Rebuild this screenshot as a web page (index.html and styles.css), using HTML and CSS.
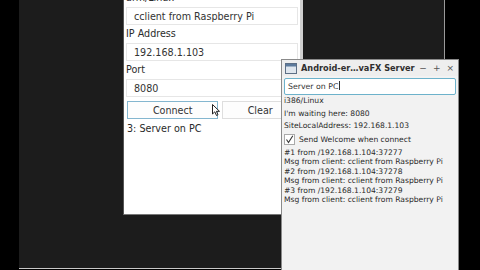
FILE: index.html
```html
<!DOCTYPE html>
<html lang="en">
<head>
    <meta charset="UTF-8">
    <title>Raspberry Pi client / JavaFX server</title>
    <link rel="stylesheet" href="styles.css">
</head>
<body>
    <div class="screen">
        <div class="desktop">
            <!-- Client app running on the Pi -->
            <div class="phone">
                <div class="label first">arm/Linux</div>
                <div class="field">cclient from Raspberry Pi</div>
                <div class="label">IP Address</div>
                <div class="field">192.168.1.103</div>
                <div class="label">Port</div>
                <div class="field">8080</div>
                <div class="buttons">
                    <button class="btn focused">Connect</button>
                    <button class="btn clear">Clear</button>
                </div>
                <div class="status">3: Server on PC</div>
            </div>
        </div>
    </div>

    <!-- Server window -->
    <div class="window">
        <div class="titlebar">
            <svg class="app-icon" width="12" height="11" viewBox="0 0 12 11">
                <rect x="0.5" y="0.5" width="11" height="10" fill="#dfe6ee" stroke="#5d6f86"/>
                <rect x="1" y="1" width="10" height="2.5" fill="#5d7a9c"/>
            </svg>
            <span class="title">Android-er…vaFX Server</span>
            <span class="controls">
                <span>−</span><span>+</span><span>×</span>
            </span>
        </div>
        <div class="win-body">
            <div class="input">Server on PC<span class="caret"></span></div>
            <div class="info">i386/Linux</div>
            <div class="info">I'm waiting here: 8080</div>
            <div class="info">SiteLocalAddress: 192.168.1.103</div>
            <div class="check-row">
                <span class="checkbox">
                    <svg width="9" height="9" viewBox="0 0 9 9">
                        <path d="M1.5 4.5 L3.5 7.5 L7.8 0.8" fill="none" stroke="#333" stroke-width="1.1"/>
                    </svg>
                </span>
                Send Welcome when connect
            </div>
            <div class="log">
                <div>#1 from /192.168.1.104:37277</div>
                <div>Msg from client: cclient from Raspberry Pi</div>
                <div>#2 from /192.168.1.104:37278</div>
                <div>Msg from client: cclient from Raspberry Pi</div>
                <div>#3 from /192.168.1.104:37279</div>
                <div>Msg from client: cclient from Raspberry Pi</div>
            </div>
        </div>
    </div>

    <!-- Mouse pointer -->
    <svg class="cursor" width="8" height="12" viewBox="0 0 8 12">
        <path d="M0.5 0.5 L0.5 10 L2.8 7.8 L4.5 11.5 L6 10.8 L4.4 7.3 L7.5 7.3 Z" fill="#fff" stroke="#222" stroke-width="1"/>
    </svg>
</body>
</html>
```

FILE: styles.css
```css
* {
    margin: 0;
    padding: 0;
    box-sizing: border-box;
}
body {
    width: 480px;
    height: 270px;
    overflow: hidden;
    background-color: #000;
    font-family: "DejaVu Sans", Arial, sans-serif;
    color: #2a2a2a;
    position: relative;
}
.screen {
    display: flex;
    height: 270px;
}
.desktop {
    margin-left: 19px;
    width: 426px;
    height: 269px;
    background-color: #1c1c1c;
    border-right: 1px solid #9a9a9a;
    border-bottom: 1px solid #c8c8c8;
}

/* client panel */
.phone {
    margin-left: 104px;
    width: 180px;
    height: 226px;
    background-color: #fff;
    border-left: 1px solid #555;
    border-right: 3px solid #cfcfcf;
    border-bottom: 1px solid #777;
    padding: 0 2px 0 1px;
    font-size: 9.6px;
}
.label {
    height: 18px;
    line-height: 18px;
    padding-left: 1px;
    color: #2b2b2b;
}
.label.first {
    margin-top: -11px;
}
.field {
    height: 18px;
    line-height: 17px;
    width: 172px;
    margin-left: 1px;
    padding-left: 7px;
    border: 1px solid #e6e6e6;
    color: #333;
    background-color: #fff;
}
.buttons {
    display: flex;
    gap: 4px;
    margin-top: 4px;
    padding-left: 2px;
}
.btn {
    height: 18px;
    font-family: inherit;
    font-size: 9.6px;
    color: #333;
    background-color: #fdfdfd;
    border: 1px solid #dedede;
}
.btn.focused {
    width: 92px;
    border-color: #84b6cf;
}
.btn.clear {
    width: 76px;
}
.status {
    margin-top: 2px;
    line-height: 16px;
    padding-left: 2px;
}

/* server window */
.window {
    position: absolute;
    left: 281px;
    top: 59px;
    width: 178px;
    height: 212px;
    background-color: #f2f2f2;
    border: 1px solid #8a8a8a;
    font-size: 7.6px;
}
.titlebar {
    display: flex;
    align-items: center;
    height: 16px;
    padding-left: 3px;
    background-color: #eeeeee;
}
.app-icon {
    flex-shrink: 0;
}
.title {
    margin-left: 4px;
    font-size: 8.2px;
    font-weight: bold;
    color: #2e2e2e;
    white-space: nowrap;
}
.controls {
    display: flex;
    gap: 6px;
    margin-left: auto;
    padding-right: 4px;
    font-size: 9px;
    color: #555;
}
.win-body {
    padding: 2px 2px 0 2px;
}
.input {
    height: 17px;
    line-height: 15px;
    width: 172px;
    padding-left: 3px;
    background-color: #fff;
    border: 1px solid #6db2cb;
    border-radius: 2px;
    color: #333;
    font-size: 7.8px;
}
.caret {
    display: inline-block;
    width: 1px;
    height: 9px;
    margin-left: 1px;
    vertical-align: -1px;
    background-color: #333;
}
.info {
    line-height: 12.5px;
}
.check-row {
    display: flex;
    align-items: center;
    gap: 4px;
    height: 13px;
}
.checkbox {
    display: flex;
    align-items: center;
    justify-content: center;
    width: 11px;
    height: 11px;
    background-color: #fff;
    border: 1px solid #aaa;
}
.log {
    margin-top: 2px;
    line-height: 9.5px;
}
.log div {
    height: 9.5px;
}
.cursor {
    position: absolute;
    left: 212px;
    top: 104px;
}
```
